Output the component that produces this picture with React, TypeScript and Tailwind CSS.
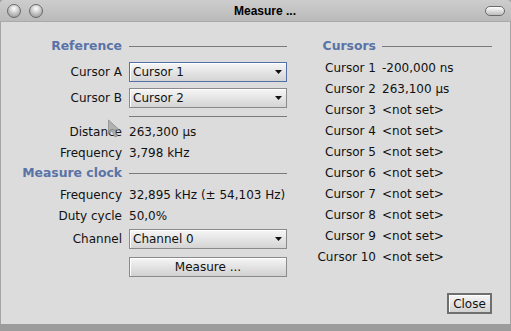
import React from "react";

const Arrow = () => (
  <svg width="7" height="4" viewBox="0 0 7 4" className="shrink-0">
    <path d="M0 0 L7 0 L3.5 4 Z" fill="#111" />
  </svg>
);

function Dropdown({ text, focused }: { text: string; focused?: boolean }) {
  return (
    <div
      className={`h-[20px] w-[158px] flex items-center justify-between pl-[3px] pr-[4px] border bg-gradient-to-b from-[#f6f6f6] to-[#d4d4d4] shadow-[inset_1px_1px_0_#ffffff] ${
        focused ? "border-[#5470a8]" : "border-[#8a8a8a]"
      }`}
    >
      <span className="leading-none">{text}</span>
      <Arrow />
    </div>
  );
}

function Header({ text }: { text: string }) {
  return (
    <>
      <div className="h-[21px] flex items-center justify-end font-bold text-[12.4px] text-[#5a73a7] whitespace-nowrap">{text}</div>
      <div className="h-[21px] flex items-center">
        <div className="h-px w-full bg-[#7a7a7a]" />
      </div>
    </>
  );
}

function Row({ label, value }: { label: string; value: React.ReactNode }) {
  return (
    <>
      <div className="h-[21px] flex items-center justify-end whitespace-nowrap">{label}</div>
      <div className="h-[21px] flex items-center whitespace-nowrap">{value}</div>
    </>
  );
}

export default function App() {
  const cursors = [
    ["Cursor 1", "-200,000 ns"],
    ["Cursor 2", "263,100 µs"],
    ["Cursor 3", "<not set>"],
    ["Cursor 4", "<not set>"],
    ["Cursor 5", "<not set>"],
    ["Cursor 6", "<not set>"],
    ["Cursor 7", "<not set>"],
    ["Cursor 8", "<not set>"],
    ["Cursor 9", "<not set>"],
    ["Cursor 10", "<not set>"],
  ];
  return (
    <div
      className="relative w-[511px] h-[331px] overflow-hidden bg-[#9c9c9c] text-[12px] text-[#111]"
      style={{ fontFamily: '"DejaVu Sans", sans-serif' }}
    >
      {/* Title bar */}
      <div className="relative h-[22px] bg-gradient-to-b from-[#cdcdcd] to-[#bababa] border-b border-[#aaaaaa] rounded-t-[4px] flex items-center">
        <div className="flex items-center gap-[8px] pl-[7px]">
          <div className="w-[14px] h-[14px] rounded-full border border-[#6a6a6a] bg-[radial-gradient(circle_at_50%_30%,#ffffff,#b8b8b8_60%,#8f8f8f)]" />
          <div className="w-[14px] h-[14px] rounded-full border border-[#6a6a6a] bg-[radial-gradient(circle_at_50%_30%,#ffffff,#b8b8b8_60%,#8f8f8f)]" />
        </div>
        <div
          className="flex-1 flex justify-center font-bold text-[12px] text-black pl-[2px]"
          style={{ fontFamily: '"Liberation Sans", Arial, sans-serif' }}
        >
          Measure ...
        </div>
        <div className="pr-[6px]">
          <div className="w-[20px] h-[10px] rounded-full border border-[#6a6a6a] bg-gradient-to-b from-[#ffffff] to-[#bdbdbd]" />
        </div>
      </div>

      {/* Body */}
      <div className="h-[302px] bg-[#dcdcdc] border-l border-r border-[#a4a4a4] flex">
        {/* Left column */}
        <div className="pt-[14px] grid grid-cols-[121px_158px] gap-x-[7px] content-start">
          <Header text="Reference" />
          <div className="h-[20px] mt-[5px] flex items-center justify-end">Cursor A</div>
          <div className="mt-[5px]"><Dropdown text="Cursor 1" focused /></div>
          <div className="h-[20px] mt-[6px] flex items-center justify-end">Cursor B</div>
          <div className="mt-[6px]"><Dropdown text="Cursor 2" /></div>
          <div className="h-[13px]" />
          <div className="h-[13px] pt-[8px]"><div className="h-px w-full bg-[#7a7a7a]" /></div>
          <Row label="Distance" value="263,300 µs" />
          <Row label="Frequency" value="3,798 kHz" />
          <Header text="Measure clock" />
          <Row label="Frequency" value="32,895 kHz (± 54,103 Hz)" />
          <Row label="Duty cycle" value="50,0%" />
          <div className="h-[20px] mt-[3px] flex items-center justify-end">Channel</div>
          <div className="mt-[3px]"><Dropdown text="Channel 0" /></div>
          <div className="mt-[8px]" />
          <div className="mt-[8px] h-[20px] w-[158px] border border-[#8a8a8a] bg-gradient-to-b from-[#f6f6f6] to-[#d0d0d0] shadow-[inset_1px_1px_0_#ffffff] flex items-center justify-center">
            Measure ...
          </div>
        </div>

        {/* Right column */}
        <div className="ml-[23px] pt-[14px] flex flex-col">
          <div className="grid grid-cols-[66px_110px] gap-x-[6px] content-start">
            <Header text="Cursors" />
            {cursors.map(([l, v]) => (
              <Row key={l} label={l} value={v} />
            ))}
          </div>
          <div className="mt-[26px] flex justify-end">
            <div className="h-[21px] w-[45px] border-2 border-[#6f6f6f] bg-gradient-to-b from-[#f6f6f6] to-[#d2d2d2] shadow-[inset_1px_1px_0_#ffffff] flex items-center justify-center">
              Close
            </div>
          </div>
        </div>
      </div>

      {/* mouse pointer overlay */}
      <svg className="absolute left-[107px] top-[119px]" width="16" height="20" viewBox="0 0 16 20">
        <path d="M1.5 1 L1.5 15 L5 11.8 L8 18 L10.5 17 L7.6 11 L12.5 11 Z" fill="#a6a6a6" fillOpacity="0.8" stroke="#7c7c7c" strokeOpacity="0.6" strokeWidth="1" />
      </svg>
    </div>
  );
}
